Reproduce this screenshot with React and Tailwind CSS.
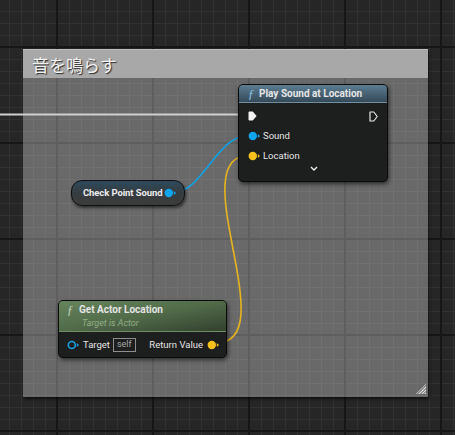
import React from "react";

const minorX = [];
for (let x = 9; x < 455; x += 12) minorX.push(x);
const minorY = [];
for (let y = 11; y < 435; y += 12) minorY.push(y);
const majorX = [57, 153, 249, 345, 441];
const majorY = [47, 143, 239, 335, 431];

function Grid() {
  return (
    <svg className="absolute inset-0" width="455" height="435">
      {minorX.map((x) => (
        <rect key={"mx" + x} x={x} y={0} width={1} height={435} fill="#313131" />
      ))}
      {minorY.map((y) => (
        <rect key={"my" + y} x={0} y={y} width={455} height={1} fill="#313131" />
      ))}
      {majorX.map((x) => (
        <rect key={"Mx" + x} x={x - 1} y={0} width={2} height={435} fill="#161616" />
      ))}
      {majorY.map((y) => (
        <rect key={"My" + y} x={0} y={y - 1} width={455} height={2} fill="#161616" />
      ))}
    </svg>
  );
}

function Wires() {
  return (
    <svg className="absolute inset-0" width="455" height="435">
      <path d="M0 114.5 L244 114.5" stroke="#cfcfcf" strokeWidth="2" fill="none" />
      <path d="M172 193 C203 193, 216 135, 250 135" stroke="#0ea2e6" strokeWidth="1.6" fill="none" />
      <path d="M216 343 C286 343, 180 155, 250 155" stroke="#e6b41e" strokeWidth="1.6" fill="none" />
    </svg>
  );
}

function DataPin({ color, filled = true }) {
  return (
    <svg width="13" height="10" viewBox="0 0 13 10" className="shrink-0">
      {filled ? (
        <circle cx="4.8" cy="5" r="4.2" fill={color} />
      ) : (
        <circle cx="4.8" cy="5" r="3.5" fill="none" stroke={color} strokeWidth="1.6" />
      )}
      <polygon points="9.8,3 12,5 9.8,7" fill={color} />
    </svg>
  );
}

function ExecIn() {
  return (
    <svg width="9" height="10" viewBox="0 0 9 10" className="shrink-0">
      <path d="M1.5 0.5 L4.8 0.5 L8.6 5 L4.8 9.5 L1.5 9.5 Q0.5 9.5 0.5 8.5 L0.5 1.5 Q0.5 0.5 1.5 0.5 Z" fill="#f4f4f4" />
    </svg>
  );
}

function ExecOut() {
  return (
    <svg width="9" height="11" viewBox="0 0 9 11" className="shrink-0">
      <path d="M1 1 L4.8 1 L8.2 5.5 L4.8 10 L1 10 Z" fill="none" stroke="#e8e8e8" strokeWidth="1.2" strokeLinejoin="round" />
    </svg>
  );
}

function FuncIcon({ color }) {
  return (
    <span
      className="italic text-[12px] leading-none"
      style={{ color, fontFamily: '"Liberation Serif", serif' }}
    >
      ƒ
    </span>
  );
}

export default function App() {
  return (
    <div
      className="relative w-[455px] h-[435px] overflow-hidden bg-[#262626] whitespace-nowrap"
      style={{ fontFamily: 'Roboto, "Noto Sans", sans-serif' }}
    >
      <Grid />

      {/* Comment box */}
      <div className="absolute left-[23px] top-[49px] w-[405px] h-[348px] flex flex-col bg-white/[0.31] shadow-[1px_2px_3px_rgba(0,0,0,0.6)]">
        <div className="h-[29px] bg-[#a8a8a8] border-t border-[#bdbdbd] flex items-center pl-[9px]">
          <span
            className="text-[17px] leading-none text-[#f2f2f2] [text-shadow:1px_1px_1px_rgba(0,0,0,0.75)]"
            style={{ fontFamily: '"Noto Sans CJK JP", "Noto Sans", sans-serif' }}
          >
            音を鳴らす
          </span>
        </div>
        <div className="flex-1" />
        <div className="absolute right-[2px] bottom-[3px]">
          <svg width="10" height="10" viewBox="0 0 10 10">
            <defs>
              <clipPath id="tri">
                <polygon points="10,0 10,10 0,10" />
              </clipPath>
            </defs>
            <g clipPath="url(#tri)" stroke="#f0f0f0" strokeWidth="1.1">
              <line x1="-2" y1="12" x2="12" y2="-2" />
              <line x1="1" y1="12" x2="13" y2="0" />
              <line x1="4" y1="12" x2="14" y2="2" />
              <line x1="7" y1="12" x2="15" y2="4" />
            </g>
          </svg>
        </div>
      </div>

      <Wires />

      {/* Play Sound at Location */}
      <div className="absolute left-[238px] top-[84px] w-[150px] h-[98px] rounded-[5px] border border-[#0a0a0a] bg-[#1d1e1e] shadow-[1px_2px_4px_rgba(0,0,0,0.6)] flex flex-col overflow-hidden">
        <div className="h-[18px] bg-gradient-to-b from-[#5c7d92] to-[#354a58] flex items-center gap-[5px] pl-[9px] border-b border-[#6f8ea2]">
          <FuncIcon color="#8fc8ea" />
          <span className="text-[10px] font-bold text-[#e6e6e6] leading-none">
            Play Sound at Location
          </span>
        </div>
        <div className="flex flex-col pl-[9px] pr-[9px] pt-[7px]">
          <div className="h-[12px] flex items-center justify-between">
            <ExecIn />
            <ExecOut />
          </div>
          <div className="h-[20px] mt-[4px] flex items-center gap-[2px]">
            <DataPin color="#0fa5ee" />
            <span className="text-[9.5px] text-[#e4e4e4] leading-none">Sound</span>
          </div>
          <div className="h-[20px] flex items-center gap-[2px]">
            <DataPin color="#f5c21c" />
            <span className="text-[9.5px] text-[#e4e4e4] leading-none">Location</span>
          </div>
          <div className="flex justify-center pl-[2px]">
            <svg width="8" height="5" viewBox="0 0 8 5">
              <path d="M1 1 L4 4 L7 1" stroke="#f0f0f0" strokeWidth="1.4" fill="none" />
            </svg>
          </div>
        </div>
      </div>

      {/* Check Point Sound */}
      <div className="absolute left-[71px] top-[180px] w-[114px] h-[26px] rounded-[11px] border border-[#0e0e0e] bg-gradient-to-b from-[#2c4a5c] via-[#363c40] to-[#3b3b3b] shadow-[1px_2px_3px_rgba(0,0,0,0.55)] flex items-center pl-[11px] pr-[7px] justify-between">
        <span className="text-[9.5px] font-bold text-[#ececec] leading-none tracking-[-0.1px]">
          Check Point Sound
        </span>
        <DataPin color="#0fa5ee" />
      </div>

      {/* Get Actor Location */}
      <div className="absolute left-[58px] top-[300px] w-[169px] h-[58px] rounded-[5px] border border-[#0a0a0a] bg-[#1d1e1e] shadow-[1px_2px_4px_rgba(0,0,0,0.6)] flex flex-col overflow-hidden">
        <div className="h-[31px] bg-gradient-to-br from-[#66845d] via-[#516b49] to-[#33412f] flex flex-col justify-center pl-[8px] gap-[3px] border-b border-[#6f8f63]">
          <div className="flex items-center gap-[6px]">
            <FuncIcon color="#c6d6c0" />
            <span className="text-[10px] font-bold text-[#e4e4e4] leading-none">
              Get Actor Location
            </span>
          </div>
          <span className="pl-[15px] text-[9px] italic text-[#93ad88] leading-none">
            Target is Actor
          </span>
        </div>
        <div className="flex-1 flex items-center justify-between pl-[8px] pr-[6px]">
          <div className="flex items-center gap-[3px]">
            <DataPin color="#1aa0e2" filled={false} />
            <span className="text-[9.5px] text-[#e4e4e4] leading-none">Target</span>
            <span className="h-[14px] px-[3px] border border-[#8e8e8e] flex items-center text-[9px] text-[#a8a8a8] leading-none">
              self
            </span>
          </div>
          <div className="flex items-center gap-[4px]">
            <span className="text-[9.5px] text-[#e4e4e4] leading-none">Return Value</span>
            <DataPin color="#f5c21c" />
          </div>
        </div>
      </div>
    </div>
  );
}
